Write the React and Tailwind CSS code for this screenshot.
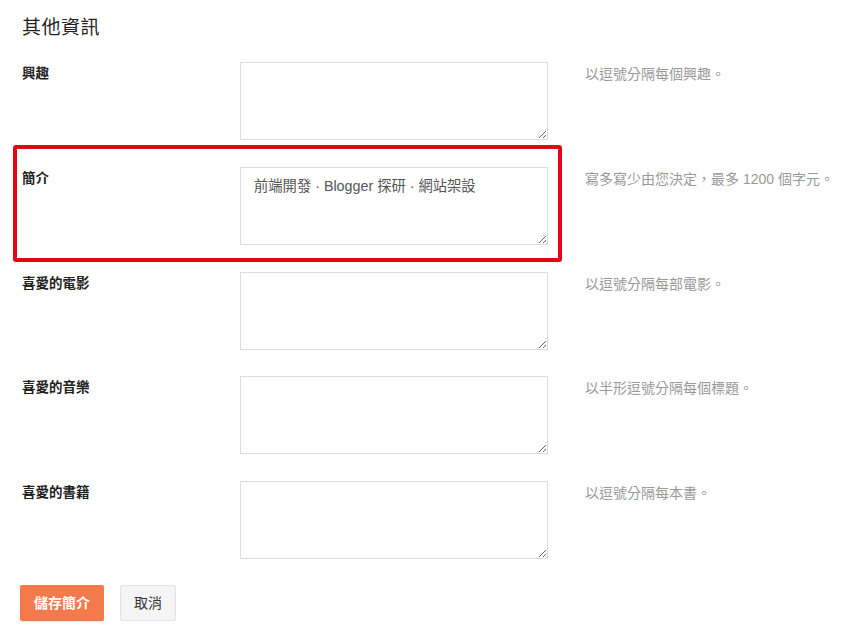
import React from 'react'

const ROWS = [
  { label: '興趣', hint: '以逗號分隔每個興趣。', value: '' },
  { label: '簡介', hint: '寫多寫少由您決定，最多 1200 個字元。', value: '前端開發 · Blogger 探研 · 網站架設', marked: true },
  { label: '喜愛的電影', hint: '以逗號分隔每部電影。', value: '' },
  { label: '喜愛的音樂', hint: '以半形逗號分隔每個標題。', value: '' },
  { label: '喜愛的書籍', hint: '以逗號分隔每本書。', value: '' },
]

export default function App() {
  return (
    <div className="w-[850px] h-[632px] bg-white text-[#222] pl-[22px] pt-[16px]" style={{ fontFamily: '"Liberation Sans", "Noto Sans CJK TC", sans-serif' }}>
      <h2 className="text-[19px] leading-[24px] font-normal text-[#222] tracking-[0.5px]">其他資訊</h2>

      <div className="mt-[22px] flex flex-col gap-[26.75px]">
        {ROWS.map((row) => (
          <div key={row.label} className="relative flex items-start">
            {row.marked && (
              <div className="absolute left-[-9px] top-[-22px] w-[549px] h-[117px] border-[4px] border-[#e30613] rounded-[3px] pointer-events-none" />
            )}
            <div className="w-[218px] pt-[2px] text-[13.5px] leading-[20px] font-bold text-[#222]">{row.label}</div>
            <textarea
              defaultValue={row.value}
              className="w-[308px] h-[78px] border border-[#dcdcdc] px-[13px] py-[8px] text-[14.3px] leading-[20px] text-[#555] outline-none resize-y"
              style={{ fontFamily: '"Liberation Sans", "Noto Sans CJK TC", sans-serif' }}
            />
            <div className="ml-[37px] pt-[2px] text-[14px] leading-[20px] text-[#999]">{row.hint}</div>
          </div>
        ))}
      </div>

      <div className="mt-[26px] flex items-center gap-[16px] ml-[-2px]">
        <button className="h-[36px] px-[14px] bg-[#f57a4b] text-white text-[14px] font-bold rounded-[2px] shadow-[0_1px_1px_rgba(0,0,0,0.1)]">儲存簡介</button>
        <button className="h-[36px] px-[13px] bg-[#f5f5f5] border border-[#e2e2e2] text-[#333] text-[14px] rounded-[2px]">取消</button>
      </div>
    </div>
  )
}
